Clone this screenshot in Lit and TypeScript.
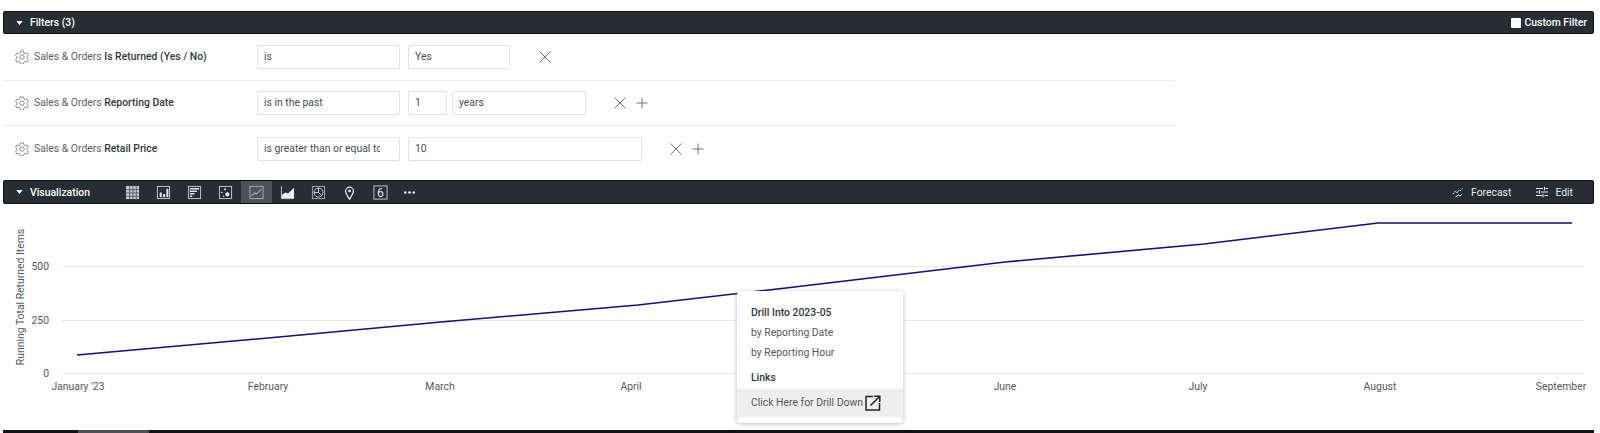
import { LitElement, html, css, svg } from "lit";
import { customElement } from "lit/decorators.js";

const W = 1600;
const linePts = "77,355 268,338 441,322 638,305 786,288 1005,262 1204,244 1378,223 1572,223";
const xLabels: [string, number][] = [
  ["January '23", 78], ["February", 268], ["March", 440], ["April", 631],
  ["June", 1005], ["July", 1198], ["August", 1380], ["September", 1561],
];
const yTicks: [string, number][] = [["500", 266], ["250", 320], ["0", 373]];

const gear = html`<svg class="gear" viewBox="0 0 24 24" fill="none" stroke="currentColor" stroke-width="1.300" stroke-linejoin="round"><path d="M9.600 1.500h4.800l.7 3.300 2.400 1.400 3.200-1.100 2.400 4.200-2.500 2.200v2.800l2.500 2.200-2.400 4.200-3.200-1.100-2.400 1.400-.7 3.300H9.600l-.7-3.300-2.400-1.400-3.200 1.100-2.400-4.200 2.500-2.200v-2.800L.9 9.300l2.400-4.200 3.200 1.100 2.400-1.400z"/><circle cx="12" cy="12" r="3.800"/></svg>`;
const cross = html`<svg class="act x" viewBox="0 0 14 14" fill="none" stroke="#6f7378" stroke-width="1"><path d="M1.500 1.500l11 11M12.500 1.500l-11 11"/></svg>`;
const plus = html`<svg class="act p" viewBox="0 0 12 12" fill="none" stroke="#6f7378" stroke-width="1"><path d="M6 .5v11M.5 6h11"/></svg>`;
const caret = html`<svg class="caret" viewBox="0 0 8 5"><path d="M0 0h8L4 5z" fill="#fff"/></svg>`;

const vizIcons = [
  svg`<rect x="1" y="1" width="14" height="14" fill="#c9cdd0"/><path d="M1 5h14M1 8.500h14M1 12h14M5 1v14M8.500 1v14M12 1v14" stroke="#262d33" stroke-width=".7"/>`,
  svg`<rect x="1.500" y="1.500" width="13" height="13" fill="none" stroke="#c9cdd0"/><path d="M4 13V8h2.200v5zM7.500 13V9.500h2.200V13zM11 13V4h2.200v9z" fill="#e2e5e7"/>`,
  svg`<rect x="1.500" y="1.500" width="13" height="13" fill="none" stroke="#c9cdd0"/><path d="M3 4h10M3 6.700h7.500M3 9.300h5M3 12h2.500" stroke="#e2e5e7" stroke-width="1.500"/>`,
  svg`<rect x="1.500" y="1.500" width="13" height="13" fill="none" stroke="#c9cdd0"/><circle cx="10" cy="10" r="2.200" fill="#eceeef"/><circle cx="7.500" cy="4.500" r="1" fill="#eceeef"/><circle cx="4" cy="8" r=".8" fill="#eceeef"/><circle cx="6" cy="12" r=".7" fill="#eceeef"/>`,
  svg`<rect x="1" y="1.500" width="14" height="13" fill="none" stroke="#a9aeb2"/><path d="M2.500 11.500l3.500-3 2 1 5-5" fill="none" stroke="#d5d8da"/>`,
  svg`<path d="M1.500 1.500v13h13" fill="none" stroke="#c9cdd0"/><path d="M2 14v-3.500l4-2.500 2.500 1L15 3v11z" fill="#eceeef"/>`,
  svg`<rect x="1.500" y="1.500" width="13" height="13" fill="none" stroke="#a9aeb2"/><circle cx="8" cy="8" r="4.800" fill="none" stroke="#d5d8da"/><path d="M8 3.200V8l3.500 3.300M8 8H3.200" fill="none" stroke="#d5d8da"/>`,
  svg`<path d="M8 15c-2.500-3.500-4.200-5.800-4.200-8.500a4.200 4.200 0 0 1 8.400 0C12.200 9.200 10.500 11.500 8 15z" fill="none" stroke="#eceeef" stroke-width="1.300"/><circle cx="8" cy="6.300" r="1.400" fill="#eceeef"/>`,
  svg`<rect x="1" y="1" width="14" height="14" fill="none" stroke="#c9cdd0"/><text x="8" y="13" font-size="13" font-weight="400" text-anchor="middle" fill="#e2e5e7" font-family="Roboto, sans-serif">6</text>`,
  svg`<circle cx="3.500" cy="8" r="1.400" fill="#eceeef"/><circle cx="8" cy="8" r="1.400" fill="#eceeef"/><circle cx="12.500" cy="8" r="1.400" fill="#eceeef"/>`,
];

@customElement("app-root")
export class AppRoot extends LitElement {
  static styles = css`
    :host { display: block; height: 433px; overflow: hidden; background: #fff; font-family: Roboto, "Liberation Sans", sans-serif; font-size: 10.400px; color: #2f3337; }
    .page { padding: 11px 6px 0 3px; display: flex; flex-direction: column; }
    .bar { display: flex; align-items: center; background: #262d33; border: 1px solid #0c0f12; border-radius: 2px; color: #fff; font-weight: 500; box-sizing: border-box; }
    .filters-bar { height: 23px; padding: 0 6px 0 12px; }
    .viz-bar { height: 24px; padding: 0 0 0 12px; margin-top: 9px; }
    .caret { width: 7px; height: 4px; margin-right: 7px; flex: none; }
    .viz-title { width: 72px; flex: none; }
    .spacer { flex: 1; }
    .check { display: flex; align-items: center; gap: 4px; }
    .box { width: 10px; height: 10px; background: #fff; border-radius: 1px; }
    .rows { width: 1171px; }
    .row { display: flex; align-items: center; height: 45px; border-bottom: 1px solid #e9ebed; padding-left: 12px; box-sizing: border-box; }
    .row:first-child { height: 47px; }
    .row:last-child { border-bottom: none; height: 45px; }
    .gear { width: 14px; height: 14px; color: #6a6f74; flex: none; margin-right: 5px; }
    .label { width: 223px; flex: none; color: #5a5f64; white-space: nowrap; padding-bottom: 1px; }
    .label b { font-weight: 500; color: #33373b; }
    .input { height: 24px; border: 1px solid #dfe1e5; border-radius: 2px; box-sizing: border-box; display: flex; align-items: center; padding: 0 6px 1px; color: #4a4e52; white-space: nowrap; overflow: hidden; background: #fff; margin-right: 8px; flex: none; }
    .input.tight { margin-right: 5px; }
    .clip { display: block; width: 116px; overflow: hidden; }
    .w143 { width: 143px; }
    .w102 { width: 102px; }
    .w39 { width: 39px; }
    .w134 { width: 134px; }
    .w234 { width: 234px; }
    .act.x { width: 14px; height: 14px; display: block; }
    .act.p { width: 12px; height: 12px; margin-left: 9px; }
    .gap26 { margin-left: 20px; }
    .gap27 { margin-left: 19px; }
    .tool { width: 31px; height: 22px; flex: none; display: flex; align-items: center; justify-content: center; }
    .tool:last-child { margin-left: -2px; }
    .tool svg { width: 15px; height: 15px; }
    .tool.on { background: #4b5258; }
    .tools { display: flex; margin-left: 15px; }
    .right-action { display: flex; align-items: center; gap: 7px; font-weight: 400; color: #e8eaec; }
    .right-action svg { width: 12px; height: 12px; flex: none; }
    .forecast { margin-right: 25px; }
    .edit { margin-right: 20px; }
    .chart { position: relative; height: 226px; margin: 0 -6px 0 -3px; }
    .chart > svg { display: block; }
    .tick { font-size: 10.400px; fill: #54585c; font-family: Roboto, sans-serif; }
    .menu { position: absolute; left: 737px; top: 87px; width: 166px; height: 132px; background: #fff; border-radius: 4px; box-shadow: 0 1px 5px rgba(0,0,0,.28); box-sizing: border-box; padding: 11px 0 7px; color: #54585c; }
    .item { height: 20.500px; line-height: 20.500px; padding-left: 14px; white-space: nowrap; }
    .head { color: #33373b; font-weight: 500; line-height: 22px; }
    .links { margin-top: 1px; height: 24px; line-height: 25px; }
    .hl { background: #eeeeee; height: 28px; display: flex; align-items: center; gap: 2px; padding-left: 14px; white-space: nowrap; }
    .hl svg { width: 16px; height: 16px; flex: none; }
    .bottom { display: flex; height: 3px; background: #0f1215; }
    .bottom i { display: block; width: 71px; margin-left: 75px; background: #4b5258; }
  `;

  render() {
    return html`
      <div class="page">
        <div class="bar filters-bar">
          ${caret}<span>Filters (3)</span><span class="spacer"></span>
          <span class="check"><span class="box"></span>Custom Filter</span>
        </div>
        <div class="rows">
          <div class="row">
            ${gear}<span class="label">Sales &amp; Orders <b>Is Returned (Yes / No)</b></span>
            <span class="input w143">is</span><span class="input w102">Yes</span>
            <span class="gap26">${cross}</span>
          </div>
          <div class="row">
            ${gear}<span class="label">Sales &amp; Orders <b>Reporting Date</b></span>
            <span class="input w143">is in the past</span><span class="input w39 tight">1</span><span class="input w134">years</span>
            <span class="gap27">${cross}</span>${plus}
          </div>
          <div class="row">
            ${gear}<span class="label">Sales &amp; Orders <b>Retail Price</b></span>
            <span class="input w143"><span class="clip">is greater than or equal to</span></span><span class="input w234">10</span>
            <span class="gap27">${cross}</span>${plus}
          </div>
        </div>
        <div class="bar viz-bar">
          ${caret}<span class="viz-title">Visualization</span>
          <div class="tools">
            ${vizIcons.map((ic, i) => html`<span class="tool ${i === 4 ? "on" : ""}"><svg viewBox="0 0 16 16">${ic}</svg></span>`)}
          </div>
          <span class="spacer"></span>
          <span class="right-action forecast"><svg viewBox="0 0 12 12" fill="none" stroke="#e8eaec" stroke-width="1"><path d="M1 8l2.500-3 1.500 2 2-3 1 1 2.500-2.500" stroke-dasharray="1.600 .7"/><path d="M3.500 11l3-2 1.500 1 2-1.500"/></svg>Forecast</span>
          <span class="right-action edit"><svg viewBox="0 0 12 12" fill="none" stroke="#e8eaec" stroke-width="1.100"><path d="M0 2.500h7M9.500 2.500H12M8.500 .8v3.400M0 6h2.500M5 6h7M3.500 4.300v3.400M0 9.500h6M8.500 9.500H12M7 7.800v3.400"/></svg>Edit</span>
        </div>
        <div class="chart">
          <svg width="${W}" height="226" viewBox="0 204 ${W} 226">
            ${yTicks.map(([t, y]) => svg`
              <line x1="62" x2="1584" y1=${y + 0.5} y2=${y + 0.5} stroke="#e6e9ee" stroke-width="1"></line>
              <text class="tick" x="49" y=${y + 4} text-anchor="end">${t}</text>`)}
            <text class="tick" transform="translate(24 297) rotate(-90)" text-anchor="middle">Running Total Returned Items</text>
            ${xLabels.map(([t, x]) => svg`<text class="tick" x=${x} y="390" text-anchor="middle">${t}</text>`)}
            <polyline points=${linePts} fill="none" stroke="#0e0e86" stroke-width="1.600"></polyline>
          </svg>
          <div class="menu">
            <div class="item head">Drill Into 2023-05</div>
            <div class="item">by Reporting Date</div>
            <div class="item">by Reporting Hour</div>
            <div class="item head links">Links</div>
            <div class="hl">Click Here for Drill Down
              <svg viewBox="0 0 16 16" fill="none" stroke="#222" stroke-width="1.500"><path d="M8 1.500H1v13.500h13.500V8M5.500 10.500L14.500 1.500M9 1.200h5.800V7"/></svg>
            </div>
          </div>
        </div>
        <div class="bottom"><i></i></div>
      </div>
    `;
  }
}
